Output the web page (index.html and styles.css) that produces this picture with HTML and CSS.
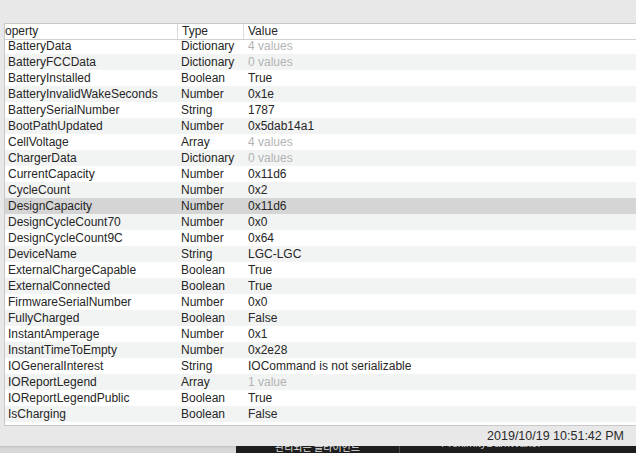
FILE: index.html
```html
<!DOCTYPE html>
<html lang="en">
<head>
<meta charset="utf-8">
<title>IORegistry Properties</title>
<link rel="stylesheet" href="styles.css">
</head>
<body>
<div class="toolbar"></div>
<div class="table">
  <div class="header">
    <div class="hcell prop"><span class="clip">Property</span></div>
    <div class="hcell">Type</div>
    <div class="hcell last">Value</div>
  </div>
  <div class="rows">
    <div class="row first"><div class="c1">BatteryData</div><div class="c2">Dictionary</div><div class="c3 muted">4 values</div></div>
    <div class="row"><div class="c1">BatteryFCCData</div><div class="c2">Dictionary</div><div class="c3 muted">0 values</div></div>
    <div class="row"><div class="c1">BatteryInstalled</div><div class="c2">Boolean</div><div class="c3">True</div></div>
    <div class="row"><div class="c1">BatteryInvalidWakeSeconds</div><div class="c2">Number</div><div class="c3">0x1e</div></div>
    <div class="row"><div class="c1">BatterySerialNumber</div><div class="c2">String</div><div class="c3">1787</div></div>
    <div class="row"><div class="c1">BootPathUpdated</div><div class="c2">Number</div><div class="c3">0x5dab14a1</div></div>
    <div class="row"><div class="c1">CellVoltage</div><div class="c2">Array</div><div class="c3 muted">4 values</div></div>
    <div class="row"><div class="c1">ChargerData</div><div class="c2">Dictionary</div><div class="c3 muted">0 values</div></div>
    <div class="row"><div class="c1">CurrentCapacity</div><div class="c2">Number</div><div class="c3">0x11d6</div></div>
    <div class="row"><div class="c1">CycleCount</div><div class="c2">Number</div><div class="c3">0x2</div></div>
    <div class="row selected"><div class="c1">DesignCapacity</div><div class="c2">Number</div><div class="c3">0x11d6</div></div>
    <div class="row"><div class="c1">DesignCycleCount70</div><div class="c2">Number</div><div class="c3">0x0</div></div>
    <div class="row"><div class="c1">DesignCycleCount9C</div><div class="c2">Number</div><div class="c3">0x64</div></div>
    <div class="row"><div class="c1">DeviceName</div><div class="c2">String</div><div class="c3">LGC-LGC</div></div>
    <div class="row"><div class="c1">ExternalChargeCapable</div><div class="c2">Boolean</div><div class="c3">True</div></div>
    <div class="row"><div class="c1">ExternalConnected</div><div class="c2">Boolean</div><div class="c3">True</div></div>
    <div class="row"><div class="c1">FirmwareSerialNumber</div><div class="c2">Number</div><div class="c3">0x0</div></div>
    <div class="row"><div class="c1">FullyCharged</div><div class="c2">Boolean</div><div class="c3">False</div></div>
    <div class="row"><div class="c1">InstantAmperage</div><div class="c2">Number</div><div class="c3">0x1</div></div>
    <div class="row"><div class="c1">InstantTimeToEmpty</div><div class="c2">Number</div><div class="c3">0x2e28</div></div>
    <div class="row"><div class="c1">IOGeneralInterest</div><div class="c2">String</div><div class="c3">IOCommand is not serializable</div></div>
    <div class="row"><div class="c1">IOReportLegend</div><div class="c2">Array</div><div class="c3 muted">1 value</div></div>
    <div class="row"><div class="c1">IOReportLegendPublic</div><div class="c2">Boolean</div><div class="c3">True</div></div>
    <div class="row"><div class="c1">IsCharging</div><div class="c2">Boolean</div><div class="c3">False</div></div>
  </div>
</div>
<div class="status">2019/10/19 10:51:42 PM</div>
<div class="behind">
  <div class="behind-left"></div>
  <div class="behind-dark">
    <div class="pane pane-ko">관리되는 클라이언트</div>
    <div class="pane pane-en">ProximityDarkWake:</div>
  </div>
</div>
</body>
</html>
```
FILE: styles.css
```css
html, body {
  margin: 0;
  height: 453px;
  overflow: hidden;
}
body {
  background: #e8e8e8;
  font-family: "Liberation Sans", Arial, sans-serif;
  font-size: 12px;
  color: #262626;
  display: flex;
  flex-direction: column;
}
.toolbar {
  flex: none;
  height: 23px;
}
.table {
  flex: none;
  height: 403px;
  box-sizing: border-box;
  margin-left: 4px;
  border: 1px solid #c9c9c9;
  border-right: 0;
  background: #fff;
  display: flex;
  flex-direction: column;
  overflow: hidden;
}
.header {
  flex: none;
  display: grid;
  grid-template-columns: 173px 66px 1fr;
  height: 16px;
  box-sizing: border-box;
  border-bottom: 1px solid #d0d0d0;
  line-height: 15px;
}
.hcell {
  padding-left: 4px;
  border-right: 1px solid #dcdcdc;
  white-space: nowrap;
  overflow: hidden;
}
.hcell.prop {
  padding-left: 0;
}
.hcell.prop .clip {
  display: inline-block;
  margin-left: -12px;
}
.hcell.last {
  border-right: 0;
}
.rows {
  flex: 1;
  display: flex;
  flex-direction: column;
}
.row {
  display: grid;
  grid-template-columns: 173px 66px 1fr;
  height: 16px;
  line-height: 16px;
  white-space: nowrap;
}
.row.first {
  height: 14px;
  line-height: 12px;
}
.row:nth-child(even) {
  background: #f2f3f3;
}
.row.selected {
  background: #d5d5d5;
}
.c1 {
  padding-left: 3px;
}
.c2 {
  padding-left: 3px;
}
.c3 {
  padding-left: 4px;
}
.muted {
  color: #b3b3b3;
}
.status {
  flex: none;
  height: 20px;
  line-height: 20px;
  text-align: right;
  padding-right: 12px;
  font-size: 12.5px;
  color: #2a2a2a;
}
.behind {
  flex: 1;
  display: flex;
  overflow: hidden;
}
.behind-left {
  width: 236px;
  flex: none;
  background: linear-gradient(#c4c4c4, #d6d6d6 40%, #d9d9d9);
}
.behind-dark {
  flex: 1;
  display: flex;
  background: #1e1e1e;
  overflow: hidden;
}
.pane {
  white-space: nowrap;
  color: #e4e4e4;
}
.pane-ko {
  width: 163px;
  flex: none;
  border-right: 1px solid #4a4a4a;
  text-align: center;
  font-family: "Noto Sans CJK KR", "Liberation Sans", sans-serif;
  font-size: 10px;
  line-height: 12px;
  margin-top: -5px;
}
.pane-en {
  padding-left: 41px;
  font-size: 11px;
  line-height: 12px;
  margin-top: -9px;
  color: #d0d0d0;
}
```
